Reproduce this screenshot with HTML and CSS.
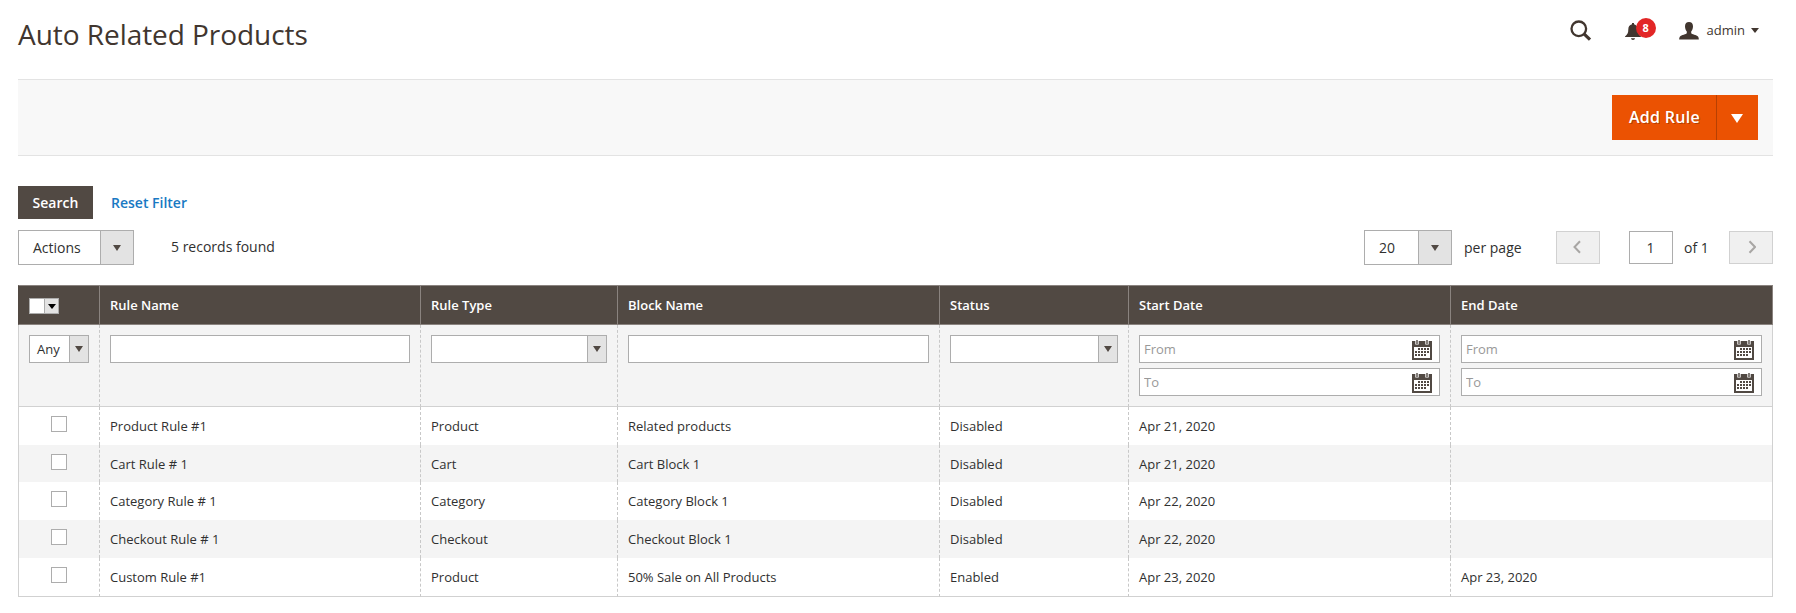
FILE: index.html
```html
<!DOCTYPE html>
<html lang="en">
<head>
    <meta charset="UTF-8">
    <meta name="viewport" content="width=device-width, initial-scale=1.0">
    <title>Auto Related Products</title>
    <link rel="stylesheet" href="styles.css">
</head>
<body>
<svg class="sprite" width="0" height="0">
    <symbol id="calendar" viewBox="0 0 20 20">
        <path fill="#514943" fill-rule="evenodd" d="M0 1h20v19H0zM2 7v11h16V7z"/>
        <path fill="none" stroke="#fff" stroke-width="3.4" d="M5 1v3.500M15 1v3.500"/>
        <path fill="none" stroke="#514943" stroke-width="1.400" d="M5 0v4M15 0v4"/>
        <path fill="none" stroke="#514943" stroke-width="2" stroke-dasharray="2 1" d="M6 9h11M3 12h14M3 15h11"/>
    </symbol>
</svg>

<header class="page-header">
    <h1>Auto Related Products</h1>
    <div class="header-tools">
        <svg class="icon-search" width="22" height="22" viewBox="0 0 22 22">
            <circle cx="8.8" cy="8.8" r="7.3" fill="none" stroke="#41362f" stroke-width="2.3"/>
            <path d="M14 13.8l6 5.8" stroke="#41362f" stroke-width="3.2"/>
        </svg>
        <div class="notifications">
            <svg width="16" height="17" viewBox="0 0 16 17">
                <path fill="#41362f" d="M7 0h2v1.3c2.500.5 3.700 2.400 3.700 5.200 0 3.500.8 5 3.300 7.100v.4H0v-.4c2.500-2.100 3.300-3.600 3.300-7.100C3.300 3.700 4.500 1.800 7 1.300zM6 15.300h4c-.2 1-.9 1.700-2 1.700s-1.800-.7-2-1.700z"/>
            </svg>
            <span class="badge">8</span>
        </div>
        <div class="account">
            <svg width="20" height="18" viewBox="0 0 20 18">
                <path fill="#41362f" d="M10 0c2.500 0 4 1.600 4 4.200 0 2.200-.7 4.300-1.800 5.300v1.700c.2.900 5.600 1.700 6.800 3.300.7.900.8 1.800.8 3H.2c0-1.200.1-2.100.8-3 1.200-1.600 6.600-2.400 6.800-3.300V9.500C6.700 8.500 6 6.400 6 4.200 6 1.600 7.500 0 10 0z"/>
            </svg>
            <span>admin</span>
            <i class="caret"></i>
        </div>
    </div>
</header>

<div class="page-actions">
    <button class="btn-primary">Add Rule</button>
    <button class="btn-toggle"><i class="caret"></i></button>
</div>

<div class="filter-actions">
    <button class="btn-search">Search</button>
    <a class="reset" href="#">Reset Filter</a>
</div>

<div class="grid-controls">
    <div class="select select-actions"><span>Actions</span><b><i class="caret"></i></b></div>
    <span class="records">5 records found</span>
    <div class="pager">
        <div class="select select-limit"><span>20</span><b><i class="caret"></i></b></div>
        <span class="per-page">per page</span>
        <button class="page-btn"><svg width="10" height="14" viewBox="0 0 10 14"><path d="M7 1.300L1.500 7 7 12.700"/></svg></button>
        <input class="page-input" type="text" value="1">
        <span class="page-total">of 1</span>
        <button class="page-btn"><svg width="10" height="14" viewBox="0 0 10 14"><path d="M3.500 1.300L9 7 3.500 12.700"/></svg></button>
    </div>
</div>

<table class="data-grid">
    <colgroup>
        <col class="col-check">
        <col class="col-name">
        <col class="col-type">
        <col class="col-block">
        <col class="col-status">
        <col class="col-start">
        <col class="col-end">
    </colgroup>
    <thead>
        <tr class="titles">
            <th><div class="multiselect"><b><i class="caret"></i></b></div></th>
            <th>Rule Name</th>
            <th>Rule Type</th>
            <th>Block Name</th>
            <th>Status</th>
            <th>Start Date</th>
            <th>End Date</th>
        </tr>
        <tr class="filters">
            <td><div class="select select-any"><span>Any</span><b><i class="caret"></i></b></div></td>
            <td><input type="text"></td>
            <td><div class="select select-filter"><span></span><b><i class="caret"></i></b></div></td>
            <td><input type="text"></td>
            <td><div class="select select-filter"><span></span><b><i class="caret"></i></b></div></td>
            <td>
                <div class="date"><input type="text" placeholder="From"><svg><use href="#calendar"/></svg></div>
                <div class="date"><input type="text" placeholder="To"><svg><use href="#calendar"/></svg></div>
            </td>
            <td>
                <div class="date"><input type="text" placeholder="From"><svg><use href="#calendar"/></svg></div>
                <div class="date"><input type="text" placeholder="To"><svg><use href="#calendar"/></svg></div>
            </td>
        </tr>
    </thead>
    <tbody>
        <tr>
            <td><input type="checkbox"></td>
            <td>Product Rule #1</td>
            <td>Product</td>
            <td>Related products</td>
            <td>Disabled</td>
            <td>Apr 21, 2020</td>
            <td></td>
        </tr>
        <tr class="short">
            <td><input type="checkbox"></td>
            <td>Cart Rule # 1</td>
            <td>Cart</td>
            <td>Cart Block 1</td>
            <td>Disabled</td>
            <td>Apr 21, 2020</td>
            <td></td>
        </tr>
        <tr>
            <td><input type="checkbox"></td>
            <td>Category Rule # 1</td>
            <td>Category</td>
            <td>Category Block 1</td>
            <td>Disabled</td>
            <td>Apr 22, 2020</td>
            <td></td>
        </tr>
        <tr>
            <td><input type="checkbox"></td>
            <td>Checkout Rule # 1</td>
            <td>Checkout</td>
            <td>Checkout Block 1</td>
            <td>Disabled</td>
            <td>Apr 22, 2020</td>
            <td></td>
        </tr>
        <tr>
            <td><input type="checkbox"></td>
            <td>Custom Rule #1</td>
            <td>Product</td>
            <td>50% Sale on All Products</td>
            <td>Enabled</td>
            <td>Apr 23, 2020</td>
            <td>Apr 23, 2020</td>
        </tr>
    </tbody>
</table>
</body>
</html>
```
FILE: styles.css
```css
* {
    box-sizing: border-box;
}

body {
    margin: 0;
    padding: 0 23px 0 18px;
    background-color: #fff;
    color: #303030;
    font-family: 'Open Sans', sans-serif;
    font-size: 14px;
    line-height: 19px;
}

button, input {
    font-family: inherit;
    font-size: inherit;
    line-height: inherit;
    margin: 0;
    padding: 0;
    border: none;
    border-radius: 0;
}

.sprite {
    position: absolute;
}

.caret {
    border: 4px solid transparent;
    border-top: 6px solid #514943;
    border-bottom: none;
}

/* Header */
.page-header {
    display: flex;
    justify-content: space-between;
    height: 79px;
}

h1 {
    margin: 15px 0 0;
    color: #41362f;
    font-size: 28px;
    font-weight: 400;
    line-height: 38px;
    letter-spacing: -0.05px;
}

.header-tools {
    display: flex;
    align-items: flex-start;
    padding-right: 14px;
}

.icon-search {
    margin: 20px 33px 0 0;
}

.notifications {
    position: relative;
    width: 34px;
    margin: 23px 20px 0 0;
}

.notifications svg {
    display: block;
}

.badge {
    position: absolute;
    top: -5px;
    left: 11px;
    width: 20px;
    height: 20px;
    border-radius: 50%;
    background-color: #e22626;
    color: #fff;
    font-size: 11px;
    font-weight: 700;
    line-height: 20px;
    text-align: center;
}

.account {
    display: flex;
    align-items: center;
    margin-top: 21px;
    color: #41362f;
    font-size: 13px;
}

.account span {
    margin: 0 6px 0 8px;
}

.account .caret {
    border-width: 5px 4px 0;
    border-top-color: #41362f;
}

/* Page actions */
.page-actions {
    display: flex;
    justify-content: flex-end;
    height: 77px;
    padding: 15px 15px 0 0;
    border-top: 1px solid #e3e3e3;
    border-bottom: 1px solid #e3e3e3;
    background-color: #f8f8f8;
}

.btn-primary, .btn-toggle {
    height: 45px;
    background-color: #eb5202;
    color: #fff;
    text-shadow: 1px 1px 0 rgba(0, 0, 0, 0.25);
}

.btn-primary {
    width: 104px;
    padding-left: 1px;
    font-size: 16px;
    font-weight: 600;
    letter-spacing: 0.3px;
}

.btn-toggle {
    display: flex;
    align-items: center;
    justify-content: center;
    width: 42px;
    padding: 1px 2px 0 0;
    border-left: 1px solid #b84002;
}

.btn-toggle .caret {
    border-width: 9px 6px 0;
    border-top-color: #fff;
}

/* Search buttons */
.filter-actions {
    display: flex;
    align-items: center;
    margin-top: 30px;
}

.btn-search {
    width: 75px;
    height: 33px;
    background-color: #514943;
    color: #fff;
    font-weight: 600;
}

.reset {
    margin-left: 18px;
    color: #1979c3;
    font-weight: 600;
    text-decoration: none;
}

/* Custom selects */
.select {
    display: flex;
    border: 1px solid #adadad;
    background-color: #fff;
}

.select span {
    flex: 1;
}

.select b {
    display: flex;
    align-items: center;
    justify-content: center;
    border-left: 1px solid #adadad;
    background-color: #e3e3e3;
}

.select-actions, .select-limit {
    height: 35px;
    line-height: 34px;
}

.select-actions span, .select-limit span {
    padding-left: 14px;
}

.select-actions b, .select-limit b {
    width: 33px;
}

.select-actions {
    width: 116px;
}

.select-limit {
    width: 88px;
}

/* Grid controls */
.grid-controls {
    display: flex;
    align-items: center;
    height: 35px;
    margin: 11px 0 20px;
}

.records {
    margin: -2px 0 0 37px;
}

.pager {
    display: flex;
    align-items: center;
    margin-left: auto;
}

.per-page {
    width: 92px;
    padding-left: 12px;
    margin-right: 12px;
    white-space: nowrap;
}

.page-btn {
    display: flex;
    align-items: center;
    justify-content: center;
    width: 44px;
    height: 33px;
    padding-bottom: 2px;
    border: 1px solid #d1d1d1;
    background-color: #f0f0f0;
}

.page-btn path {
    fill: none;
    stroke: #a8a6a4;
    stroke-width: 2;
}

.page-input {
    width: 44px;
    height: 33px;
    margin-left: 29px;
    padding-right: 1px;
    border: 1px solid #adadad;
    color: #303030;
    text-align: center;
}

.page-total {
    width: 56px;
    padding-left: 11px;
}

/* Data grid */
.data-grid {
    width: 1755px;
    table-layout: fixed;
    border-collapse: separate;
    border-spacing: 0;
    font-size: 13px;
    line-height: 18px;
}

.col-check { width: 81px; }
.col-name { width: 321px; }
.col-type { width: 197px; }
.col-block { width: 322px; }
.col-status { width: 189px; }
.col-start { width: 322px; }
.col-end { width: 323px; }

.titles th {
    height: 40px;
    padding: 0 10px;
    border-top: 1px solid #8a837f;
    border-bottom: 1px solid #8a837f;
    border-left: 1px solid #8a837f;
    background-color: #514943;
    color: #fff;
    font-weight: 600;
    text-align: left;
}

.titles th:first-child {
    border-left-color: #514943;
}

.titles th:last-child {
    border-right: 1px solid #8a837f;
}

.multiselect {
    display: flex;
    justify-content: flex-end;
    width: 30px;
    height: 16px;
    margin-top: 2px;
    border: 1px solid #adadad;
    background-color: #fff;
}

.multiselect b {
    display: flex;
    align-items: center;
    justify-content: center;
    width: 14px;
    border-left: 1px solid #adadad;
    background-color: #e3e3e3;
}

.multiselect .caret {
    border-width: 5px 4px 0;
    border-top-color: #000;
}

.data-grid td {
    padding: 10px 10px 0;
    border-left: 1px dashed #c8c8c8;
    vertical-align: top;
}

.data-grid td:first-child {
    border-left: 1px solid #d1d1d1;
}

.data-grid td:last-child {
    border-right: 1px solid #d1d1d1;
}

.filters td {
    height: 82px;
    border-bottom: 1px solid #d1d1d1;
    background-color: #f4f4f4;
}

.filters input {
    display: block;
    width: 100%;
    height: 28px;
    padding: 0 4px;
    border: 1px solid #adadad;
    background-color: #fff;
}

.filters input::placeholder {
    color: #999;
    opacity: 1;
}

.select-any, .select-filter {
    height: 28px;
    line-height: 27px;
}

.select-any {
    width: 60px;
}

.select-any span {
    padding-left: 7px;
}

.select-any b, .select-filter b {
    width: 19px;
}

.date {
    position: relative;
    margin-bottom: 5px;
}

.date svg {
    position: absolute;
    top: 5px;
    right: 8px;
    width: 20px;
    height: 20px;
}

tbody tr td {
    height: 38px;
}

tbody tr.short td {
    height: 37px;
}

tbody tr:nth-child(even) td {
    background-color: #f4f4f4;
}

tbody tr:last-child td {
    height: 39px;
    border-bottom: 1px solid #d1d1d1;
}

tbody td:first-child {
    padding-top: 9px;
}

input[type="checkbox"] {
    display: block;
    width: 16px;
    height: 16px;
    margin-left: 22px;
    appearance: none;
    border: 1px solid #adadad;
    background-color: #fff;
}
```
